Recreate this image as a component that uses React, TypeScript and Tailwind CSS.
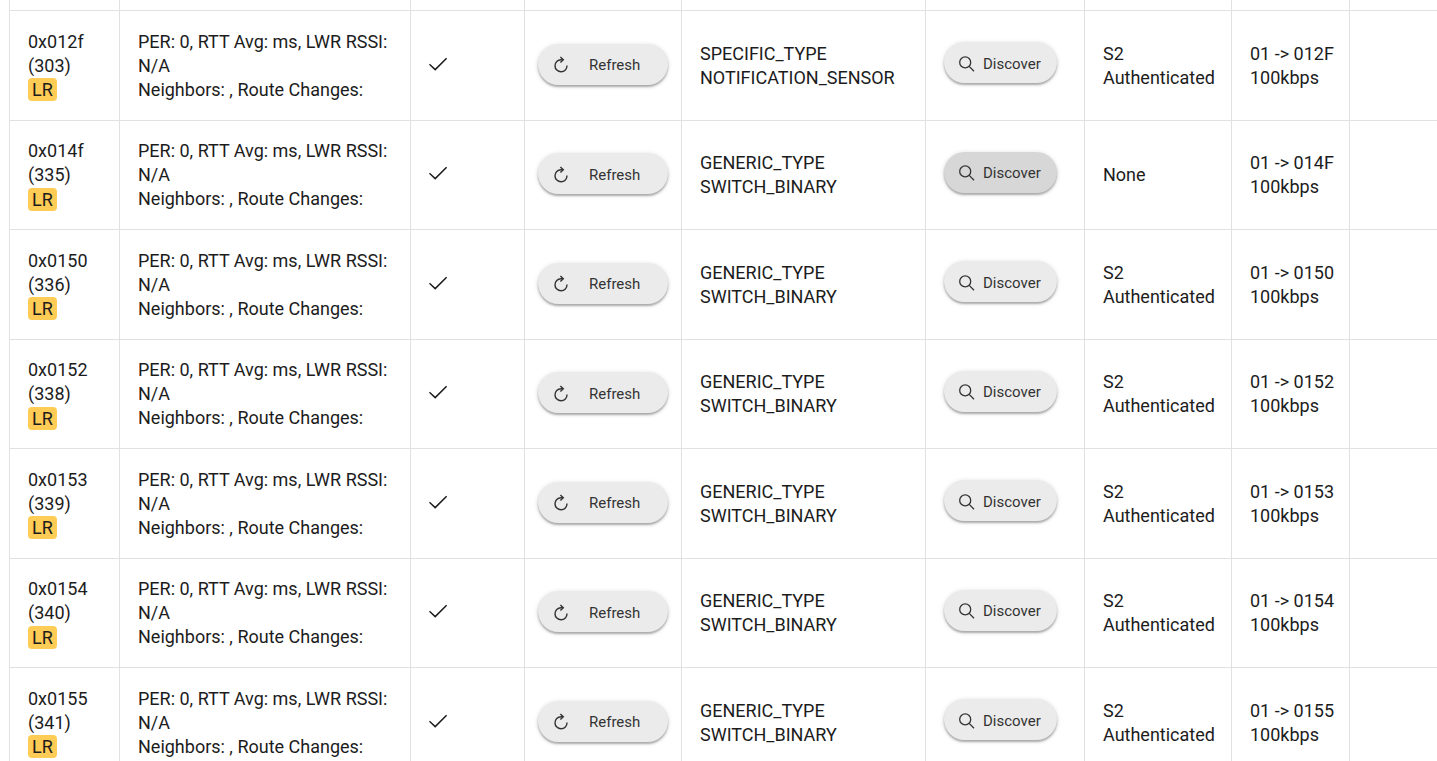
type NodeRow = {
  id: string
  dec: number
  type: string[]
  security: string[]
  active?: boolean
}

const switchBinary = ["GENERIC_TYPE", "SWITCH_BINARY"]
const s2 = ["S2", "Authenticated"]

const nodes: NodeRow[] = [
  { id: "012f", dec: 303, type: ["SPECIFIC_TYPE", "NOTIFICATION_SENSOR"], security: s2 },
  { id: "014f", dec: 335, type: switchBinary, security: ["None"], active: true },
  { id: "0150", dec: 336, type: switchBinary, security: s2 },
  { id: "0152", dec: 338, type: switchBinary, security: s2 },
  { id: "0153", dec: 339, type: switchBinary, security: s2 },
  { id: "0154", dec: 340, type: switchBinary, security: s2 },
  { id: "0155", dec: 341, type: switchBinary, security: s2 },
]

const columns = [
  "w-[110px]",
  "w-[291px]",
  "w-[114px]",
  "w-[157px]",
  "w-[244px]",
  "w-[159px]",
  "w-[147px]",
  "w-[118px]",
  "w-auto",
]

const border = "border-l border-b border-[#e1e1e1] align-middle"
const cell = `${border} px-[18px] py-0`
const button =
  "flex h-[41px] items-center rounded-full pt-0.5 text-[15px] text-[#333] shadow-[0_2px_2px_rgba(0,0,0,0.26),0_1px_5px_rgba(0,0,0,0.16)] hover:bg-[#d7d7d7]"

function CheckIcon() {
  return (
    <svg width="20" height="16" viewBox="0 0 20 16" fill="none" stroke="currentColor" strokeWidth="1.5" role="img" aria-label="Yes">
      <path d="M.4 8.2 6.2 13.6 17.6 2.2" />
    </svg>
  )
}

function RefreshIcon() {
  return (
    <svg width="16" height="18" viewBox="0 0 16 18" fill="none" stroke="currentColor" strokeWidth="1.4" aria-hidden="true">
      <path d="M9.8 3.8H8A6 6 0 1 0 14 9.6" />
      <path d="M7.4 1 10.3 3.8 7.4 6.6" />
    </svg>
  )
}

function SearchIcon() {
  return (
    <svg width="16" height="16" viewBox="0 0 16 16" fill="none" stroke="currentColor" strokeWidth="1.3" aria-hidden="true">
      <circle cx="6.2" cy="6.4" r="5.5" />
      <path d="M10.2 10.4 15 15.2" />
    </svg>
  )
}

function Lines({ items }: { items: string[] }) {
  return (
    <>
      {items.map((item) => (
        <div key={item}>{item}</div>
      ))}
    </>
  )
}

function Row({ node }: { node: NodeRow }) {
  return (
    <tr className="h-[109px] even:h-[110px]">
      <td className={cell}>
        <div>0x{node.id}</div>
        <div>({node.dec})</div>
        <div className="flex h-6 items-center">
          <span className="rounded bg-[#ffcc55] px-1 leading-[23px]">LR</span>
        </div>
      </td>
      <td className={cell}>
        <div>PER: 0, RTT Avg: ms, LWR RSSI: N/A</div>
        <div>Neighbors: , Route Changes:</div>
      </td>
      <td className={`${border} px-[18px] pt-0 pb-1`}>
        <CheckIcon />
      </td>
      <td className={`${border} px-[13px] pt-0 pb-[3px]`}>
        <button type="button" className={`${button} w-full bg-[#ebebeb] pl-[15px]`}>
          <RefreshIcon />
          <span className="ml-5">Refresh</span>
        </button>
      </td>
      <td className={cell}>
        <Lines items={node.type} />
      </td>
      <td className={`${border} px-[18px] pt-0 pb-1.5`}>
        <button type="button" className={`${button} pl-[15px] pr-4 ${node.active ? "bg-[#d7d7d7]" : "bg-[#ebebeb]"}`}>
          <SearchIcon />
          <span className="ml-2">Discover</span>
        </button>
      </td>
      <td className={cell}>
        <Lines items={node.security} />
      </td>
      <td className={`${cell} whitespace-nowrap`}>
        <div>01 -&gt; {node.id.toUpperCase()}</div>
        <div>100kbps</div>
      </td>
      <td className={cell} />
    </tr>
  )
}

export default function App() {
  return (
    <main className="h-screen overflow-hidden bg-white pl-[9px] font-[Roboto,'Liberation_Sans',sans-serif] text-[18px] leading-6 text-[#1c1c1c]">
      <table className="w-full table-fixed border-separate border-spacing-0">
        <colgroup>
          {columns.map((width, i) => (
            <col key={i} className={width} />
          ))}
        </colgroup>
        <tbody>
          {/* tail of the row scrolled out above */}
          <tr className="h-[11px]">
            {columns.map((_, i) => (
              <td key={i} className={cell} />
            ))}
          </tr>
          {nodes.map((node) => (
            <Row key={node.id} node={node} />
          ))}
        </tbody>
      </table>
    </main>
  )
}
